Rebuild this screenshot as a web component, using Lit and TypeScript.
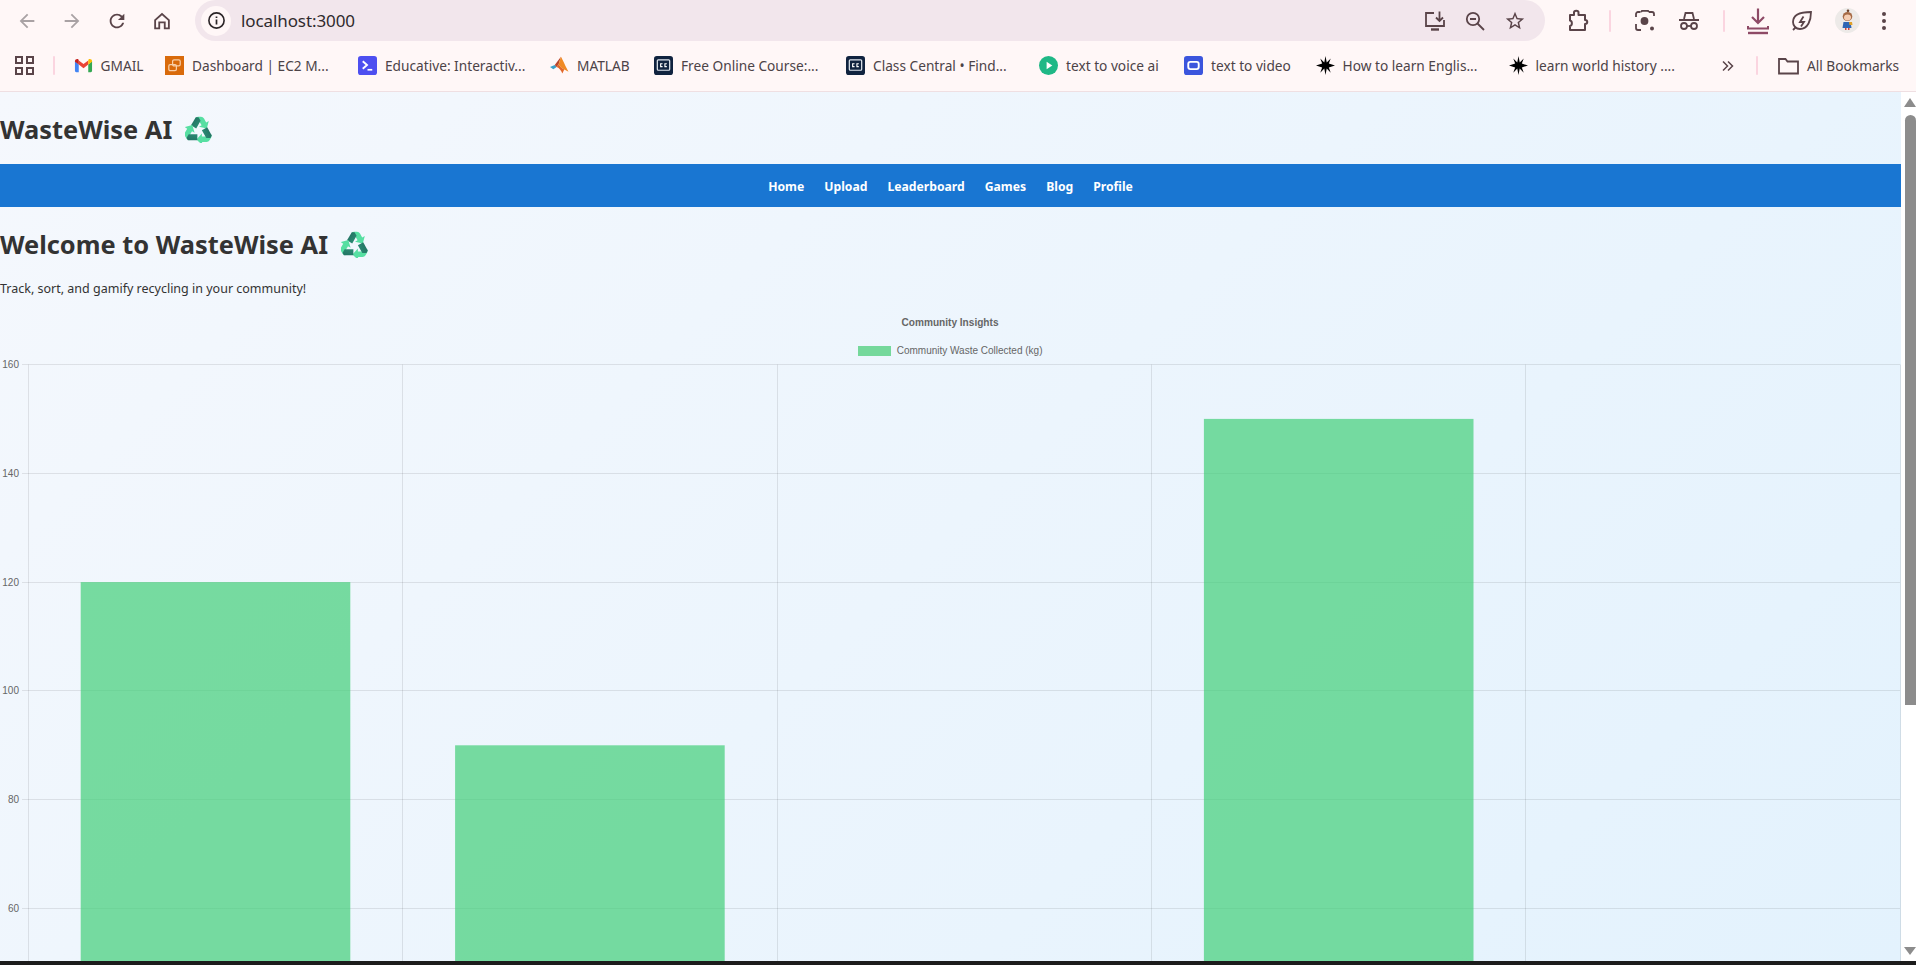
import { LitElement, css, html, svg } from "lit";
import { customElement } from "lit/decorators.js";
import { styleMap } from "lit/directives/style-map.js";

const ICON = "#5a4449";

// recycling symbol, one arrow drawn three times around the centre
const recycle = () => html`
  <svg class="recycle" viewBox="0 0 27 27">
    <defs>
      <linearGradient id="dark" x1="0" y1="0" x2="1" y2="1">
        <stop offset="0" stop-color="#1f6a5c"></stop>
        <stop offset="1" stop-color="#2f9379"></stop>
      </linearGradient>
    </defs>
    ${[0, 120, 240].map(
      (a) => svg`
        <g transform=${`rotate(${a} 13.5 15)`}>
          <path d="M10 2.500Q11 .8 13 .8H16Q18 .8 19 2.600L21.200 6.400 23.800 4.900 21.800 12.600 14 10.800 16.600 9.300 14.200 5.200Z" fill="#57dfa2"></path>
          <path d="M10.800 1.200 6 9.300 11.200 12.400 15.600 4.800 13.500 1.200Z" fill="url(#dark)"></path>
        </g>
      `,
    )}
  </svg>
`;

const path = (d: string, size = 22, fill = ICON) => html`
  <svg width=${size} height=${size} viewBox="0 0 24 24" fill=${fill}><path d=${d}></path></svg>
`;

const navIcons = {
  back: "M20 11H7.830l5.590-5.590L12 4l-8 8 8 8 1.410-1.410L7.830 13H20z",
  forward: "M12 4l-1.410 1.410L16.170 11H4v2h12.170l-5.580 5.590L12 20l8-8z",
  reload:
    "M17.650 6.350A7.960 7.960 0 0 0 12 4c-4.420 0-7.990 3.580-7.990 8s3.570 8 7.990 8c3.730 0 6.840-2.550 7.730-6h-2.080A5.990 5.990 0 0 1 12 18c-3.310 0-6-2.690-6-6s2.690-6 6-6c1.660 0 3.140.690 4.220 1.780L13 11h7V4z",
  home: "M12 3 3.500 10.500V21H10v-6.500h4V21h6.500V10.500zM18.500 19H16v-6.500H8V19H5.500v-7.600L12 5.700l6.500 5.700z",
  star: "M22 9.240l-7.190-.620L12 2 9.190 8.630 2 9.240l5.460 4.730L5.820 21 12 17.270 18.180 21l-1.630-7.030zM12 15.400l-3.760 2.270 1-4.280-3.320-2.880 4.380-.380L12 6.100l1.710 4.040 4.380.380-3.320 2.880 1 4.280z",
};

const bookmarks = [
  { icon: "gmail", label: "GMAIL", x: 73.5, next: 165 },
  { icon: "aws", label: "Dashboard | EC2 M...", x: 165, next: 358 },
  { icon: "educative", label: "Educative: Interactiv...", x: 358, next: 550 },
  { icon: "matlab", label: "MATLAB", x: 550, next: 654 },
  { icon: "cc", label: "Free Online Course:...", x: 654, next: 846 },
  { icon: "cc", label: "Class Central • Find...", x: 846, next: 1039 },
  { icon: "play", label: "text to voice ai", x: 1039, next: 1184 },
  { icon: "video", label: "text to video", x: 1184, next: 1315.5 },
  { icon: "burst", label: "How to learn Englis...", x: 1315.5, next: 1508.5 },
  { icon: "burst", label: "learn world history ....", x: 1508.5, next: 1722 },
];

const favicon = (name: string) => {
  switch (name) {
    case "gmail":
      return html`<svg class="fav" viewBox="0 0 20 20">
        <path d="M1 5.500v10c0 .800.600 1.500 1.400 1.500H5V9z" fill="#4285f4"></path>
        <path d="M19 5.500v10c0 .800-.600 1.500-1.400 1.500H15V9z" fill="#34a853"></path>
        <path d="M5 9V4.800L10 8.500l5-3.700V9l-5 3.800z" fill="#ea4335"></path>
        <path d="M1 5.500C1 3.600 3.200 2.500 4.700 3.600L5 4.800V9L1 6z" fill="#c5221f"></path>
        <path d="M19 5.500c0-1.900-2.200-3-3.700-1.900l-.3 1.200V9l4-3z" fill="#fbbc04"></path>
      </svg>`;
    case "aws":
      return html`<svg class="fav" viewBox="0 0 20 20">
        <rect width="20" height="20" fill="#d96a0b"></rect>
        <g fill="none" stroke="#f8cfa8" stroke-width="1.300">
          <rect x="8" y="4" width="8" height="6.500" rx="1.500"></rect>
          <rect x="4" y="9" width="8" height="6.500" rx="1.500"></rect>
        </g>
      </svg>`;
    case "educative":
      return html`<svg class="fav" viewBox="0 0 20 20">
        <rect width="20" height="20" rx="3" fill="#4d4ff0"></rect>
        <path d="M5 5.500 9.500 9.500 5 13.500" fill="none" stroke="#fff" stroke-width="2"></path>
        <path d="M10 14.500h5" stroke="#fff" stroke-width="1.800"></path>
      </svg>`;
    case "matlab":
      return html`<svg class="fav" viewBox="0 0 20 20">
        <path d="M0 11.500 5 9.500l2 2-3.500 2.500z" fill="#3aa0c8"></path>
        <path d="M5 9.500 11.500.800 9 9 7 11.500z" fill="#b9452a"></path>
        <path d="M11.500.800c2 3 5 11 8 15.700l-4.500-2.400-3-1.800-3-3.300z" fill="#f08a24"></path>
        <path d="M7 11.500 9 9l3 3.300 3 1.800-2 4.400c-1-3-3-5.800-6-7z" fill="#e2672a"></path>
      </svg>`;
    case "cc":
      return html`<svg class="fav" viewBox="0 0 20 20">
        <rect width="20" height="20" rx="3" fill="#10233f"></rect>
        <rect x="3.500" y="4" width="13" height="11" rx="1" fill="none" stroke="#dfe6ee" stroke-width="1.300"></rect>
        <path d="M9 8.200H7v3h2M13.500 8.200h-2v3h2" fill="none" stroke="#fff" stroke-width="1.200"></path>
      </svg>`;
    case "play":
      return html`<svg class="fav" viewBox="0 0 20 20">
        <circle cx="10" cy="10" r="10" fill="#1fb886"></circle>
        <path d="M8 6l6 4-6 4z" fill="#fff"></path>
      </svg>`;
    case "video":
      return html`<svg class="fav" viewBox="0 0 20 20">
        <rect width="20" height="20" rx="3" fill="#3b55dd"></rect>
        <rect x="4.500" y="6.200" width="11" height="7.600" rx="2.200" fill="none" stroke="#fff" stroke-width="2"></rect>
      </svg>`;
    default:
      return html`<svg class="fav" viewBox="0 0 20 20">
        <path d="M10 0l1.300 6.900L15.500 2.500l-2 5.500L20 10l-6.500 2 2 5.500-4.200-4.400L10 20l-1.300-6.900-4.200 4.400 2-5.500L0 10l6.500-2-2-5.500 4.200 4.400z" fill="#000"></path>
      </svg>`;
  }
};

@customElement("browser-chrome")
class BrowserChrome extends LitElement {
  static styles = css`
    :host {
      display: block;
      background: #fff7f7;
      font-family: "Noto Sans", sans-serif;
      color: #4a3d42;
    }
    .toolbar {
      display: flex;
      align-items: center;
      height: 41px;
    }
    .nav {
      display: flex;
      align-items: center;
      width: 195px;
      padding-left: 16px;
      box-sizing: border-box;
      gap: 23px;
    }
    .nav svg {
      display: block;
    }
    .omni {
      display: flex;
      align-items: center;
      width: 1350px;
      height: 41px;
      background: #f2e6ec;
      border-radius: 21px;
      box-sizing: border-box;
      padding: 0 19px 0 6px;
    }
    .info {
      display: flex;
      align-items: center;
      justify-content: center;
      width: 30px;
      height: 30px;
      background: #fff7f7;
      border-radius: 50%;
    }
    .url {
      margin-left: 10px;
      font-size: 17px;
      color: #2f2a2c;
      letter-spacing: -0.1px;
      flex: 1;
    }
    .omni-icons {
      display: flex;
      align-items: center;
      gap: 18px;
    }
    .omni-icons svg {
      display: block;
    }
    .actions {
      display: flex;
      align-items: center;
      margin-left: 22px;
    }
    .actions svg {
      display: block;
    }
    .sep {
      width: 2px;
      height: 22px;
      background: #fbd5e0;
      border-radius: 1px;
    }
    .bookmarks {
      display: flex;
      align-items: center;
      height: 51px;
      box-sizing: border-box;
      padding-bottom: 1px;
      border-bottom: 1px solid #efdfe2;
      font-size: 13.7px;
      color: #4c4347;
      white-space: nowrap;
    }
    .apps {
      display: flex;
      width: 53px;
      box-sizing: border-box;
      padding-left: 15px;
    }
    .bookmarks .sep {
      height: 19px;
    }
    .list {
      display: flex;
      align-items: center;
      margin-left: 18.5px;
    }
    .mark {
      display: flex;
      align-items: center;
      gap: 8px;
      overflow: hidden;
      flex: none;
    }
    .fav {
      width: 19px;
      height: 19px;
      flex: none;
    }
    .more {
      width: 34px;
      display: flex;
      align-items: center;
    }
    .all {
      display: flex;
      align-items: center;
      gap: 8px;
      margin-left: 20px;
    }
  `;

  render() {
    return html`
      <div class="toolbar">
        <div class="nav">
          ${path(navIcons.back, 22, "#a9a2a4")} ${path(navIcons.forward, 22, "#a9a2a4")}
          ${path(navIcons.reload)} ${path(navIcons.home)}
        </div>
        <div class="omni">
          <div class="info">
            <svg width="19" height="19" viewBox="0 0 20 20">
              <circle cx="10" cy="10" r="8" fill="none" stroke="#2b2527" stroke-width="1.700"></circle>
              <path d="M10 9v5.200M10 5.800v1.600" stroke="#2b2527" stroke-width="1.800"></path>
            </svg>
          </div>
          <span class="url">localhost:3000</span>
          <div class="omni-icons">
            <svg width="22" height="22" viewBox="0 0 22 22" fill="none" stroke=${ICON} stroke-width="1.800">
              <path d="M10 3H2v13h18v-6"></path>
              <path d="M7 19.500h8" stroke-width="2.400"></path>
              <path d="M15.500 1.500v9M12 7.500l3.500 3.500 3.500-3.500"></path>
            </svg>
            <svg width="22" height="22" viewBox="0 0 22 22" fill="none" stroke=${ICON} stroke-width="1.800">
              <circle cx="9" cy="9" r="6.200"></circle>
              <path d="M13.500 13.500 20 20M6 9h6"></path>
            </svg>
            ${path(navIcons.star)}
          </div>
        </div>
        <div class="actions">
          <svg width="22" height="24" viewBox="0 0 22 24" fill="none" stroke=${ICON} stroke-width="2" stroke-linejoin="round">
            <path d="M3 6h4V3.500C7 1 11.500 1 11.500 3.500V6H18v5c3 0 3 4 0 4v6H3v-4c2.500-.500 2.500-5 0-5.500z"></path>
          </svg>
          <div class="sep" style="margin-left:20px"></div>
          <svg style="margin-left:23px" width="22" height="22" viewBox="0 0 22 22" fill="none" stroke=${ICON} stroke-width="1.800">
            <path d="M2 7V4c0-1 1-2 2-2h2.500M15 2h3c1 0 2 1 2 2v2M2 14v4c0 1 1 2 2 2h3"></path>
            <path d="M7 2l1-1.200h6L15 2"></path>
            <circle cx="10.500" cy="11" r="3" fill=${ICON}></circle>
            <circle cx="18" cy="18.500" r="2" fill=${ICON} stroke="none"></circle>
          </svg>
          <svg style="margin-left:21px" width="24" height="22" viewBox="0 0 24 22" fill="none" stroke=${ICON} stroke-width="1.800">
            <path d="M7 9l1.500-6h7L17 9" fill="none"></path>
            <path d="M2 10h20" stroke-width="2"></path>
            <circle cx="7" cy="16" r="3"></circle>
            <circle cx="17" cy="16" r="3"></circle>
            <path d="M10 16h4"></path>
          </svg>
          <div class="sep" style="margin-left:22px"></div>
          <svg style="margin-left:21px" width="24" height="28" viewBox="0 0 24 28" fill="none" stroke="#8e4a66" stroke-width="2.200">
            <path d="M12 1.500v14M6 10l6 6 6-6"></path>
            <path d="M2 19v2.500h20V19" stroke-width="2"></path>
            <path d="M2 26h20" stroke-width="2.400"></path>
          </svg>
          <svg style="margin-left:21px" width="22" height="22" viewBox="0 0 22 22" fill="none" stroke=${ICON} stroke-width="1.800">
            <path d="M20 2C11 2 2 4 2 12c0 4 3 7 7 7 8 0 11-9 11-17z"></path>
            <path d="M12.500 6.500 9 12h4l-3 4.500"></path>
            <path d="M2 20l3-3"></path>
          </svg>
          <svg style="margin-left:22px" width="25" height="25" viewBox="0 0 25 25">
            <circle cx="12.500" cy="12.500" r="12.500" fill="#edeae8"></circle>
            <circle cx="13" cy="2.800" r="1.300" fill="#6b3f28"></circle>
            <ellipse cx="12.500" cy="8.500" rx="4.800" ry="4.600" fill="#a66a45"></ellipse>
            <ellipse cx="12.500" cy="9.500" rx="3.500" ry="3" fill="#f5cdb2"></ellipse>
            <path d="M8.500 14h7l1 6h-9z" fill="#2f66b5"></path>
            <path d="M14 14h3l.5 3h-3z" fill="#e0a12a"></path>
            <path d="M10 20h1.500v2H10zM13 20h1.500v2H13z" fill="#d2453d"></path>
          </svg>
          <svg style="margin-left:21px" width="6" height="20" viewBox="0 0 6 20" fill=${ICON}>
            <circle cx="3" cy="3" r="2"></circle>
            <circle cx="3" cy="10" r="2"></circle>
            <circle cx="3" cy="17" r="2"></circle>
          </svg>
        </div>
      </div>
      <div class="bookmarks">
        <div class="apps">
          <svg width="19" height="19" viewBox="0 0 19 19" fill="none" stroke=${ICON} stroke-width="2">
            <rect x="1" y="1" width="6" height="6"></rect>
            <rect x="12" y="1" width="6" height="6"></rect>
            <rect x="1" y="12" width="6" height="6"></rect>
            <rect x="12" y="12" width="6" height="6"></rect>
          </svg>
        </div>
        <div class="sep"></div>
        <div class="list">
          ${bookmarks.map(
            (b) => html`
              <div class="mark" style=${styleMap({ width: `${b.next - b.x}px` })}>
                ${favicon(b.icon)}<span>${b.label}</span>
              </div>
            `,
          )}
          <div class="more">
            <svg width="12" height="12" viewBox="0 0 12 12" fill="none" stroke=${ICON} stroke-width="1.500">
              <path d="M1 1.500 5.500 6 1 10.500M6 1.500 10.500 6 6 10.500"></path>
            </svg>
          </div>
          <div class="sep"></div>
          <div class="all">
            <svg width="21" height="18" viewBox="0 0 21 18" fill="none" stroke=${ICON} stroke-width="1.800">
              <path d="M1 2h6.500l2 2.500H20V16.500H1z"></path>
            </svg>
            <span>All Bookmarks</span>
          </div>
        </div>
      </div>
    `;
  }
}

const TICKS = [160, 140, 120, 100, 80, 60];
const BARS = [120, 90, 0, 150, 0];

// chart sits at the top of its svg box, y here is measured from the svg top
@customElement("waste-chart")
class WasteChart extends LitElement {
  static styles = css`
    :host {
      display: block;
    }
    svg {
      display: block;
      width: 1901px;
      height: 700px;
      font-family: "Liberation Sans", Arial, sans-serif;
    }
    .title {
      font-size: 10.1px;
      font-weight: 700;
      fill: #666;
      text-anchor: middle;
    }
    .legend {
      font-size: 10px;
      fill: #666;
    }
    .tick {
      font-size: 10px;
      fill: #666;
      text-anchor: end;
    }
    .grid {
      stroke: rgba(0, 0, 0, 0.09);
      stroke-width: 1;
    }
    .bar {
      fill: rgba(66, 206, 120, 0.7);
    }
  `;

  render() {
    const top = 65.5;
    const left = 28.3;
    const step = 374.4;
    const unit = 108.8 / 20;
    const yOf = (v: number) => top + (160 - v) * unit;
    return html`
      <svg viewBox="0 0 1901 700">
        <text class="title" x="950" y="27">Community Insights</text>
        <rect x="858" y="47" width="33" height="10" fill="#75d89b"></rect>
        <text class="legend" x="896.7" y="52.5" dominant-baseline="middle">Community Waste Collected (kg)</text>
        ${[0, 1, 2, 3, 4, 5].map((i) => {
          const x = Math.floor(left + i * step) + 0.5;
          return svg`<line class="grid" x1=${x} x2=${x} y1=${top} y2="700"></line>`;
        })}
        ${TICKS.map((t) => {
          const y = Math.floor(yOf(t)) + 0.5;
          return svg`
            <line class="grid" x1="22" x2="1900" y1=${y} y2=${y}></line>
            <text class="tick" x="19" y=${y + 3.5}>${t}</text>
          `;
        })}
        ${BARS.map((v, i) =>
          v
            ? svg`<rect class="bar" x=${left + i * step + 52.4} y=${yOf(v)} width="269.6" height=${700 - yOf(v)}></rect>`
            : "",
        )}
      </svg>
    `;
  }
}

@customElement("app-root")
class AppRoot extends LitElement {
  static styles = css`
    :host {
      display: flex;
      flex-direction: column;
      height: 965px;
      overflow: hidden;
      background: #1c1c1c;
      font-family: "Noto Sans", sans-serif;
      color: #333;
    }
    .viewport {
      display: flex;
      height: 869px;
      overflow: hidden;
      flex: none;
    }
    .page {
      width: 1901px;
      background: linear-gradient(135deg, #f5f8fd 0%, #e3f2fd 100%);
      overflow: hidden;
    }
    .heading {
      display: flex;
      align-items: center;
      gap: 13px;
      margin: 0;
      font-size: 25.4px;
      font-weight: 700;
      line-height: 36px;
      white-space: nowrap;
    }
    header {
      height: 72px;
      box-sizing: border-box;
      padding-top: 2px;
      display: flex;
      align-items: center;
    }
    .recycle {
      width: 27px;
      height: 27px;
      flex: none;
    }
    nav {
      display: flex;
      justify-content: center;
      align-items: center;
      gap: 20px;
      height: 43px;
      box-sizing: border-box;
      padding-top: 1px;
      background: #1976d2;
      color: #fff;
      font-size: 12.2px;
      font-weight: 700;
    }
    main .heading {
      margin: 19px 0 17px;
    }
    main p {
      margin: 0;
      font-size: 12.5px;
      line-height: 20px;
    }
    .scroll {
      width: 15px;
      background: #fff;
      display: flex;
      flex-direction: column;
      align-items: flex-end;
      padding-top: 6px;
      box-sizing: border-box;
    }
    .up,
    .down {
      width: 0;
      height: 0;
      border-left: 6px solid transparent;
      border-right: 6px solid transparent;
    }
    .up {
      border-bottom: 9px solid #8c8c8c;
    }
    .thumb {
      width: 11px;
      height: 590px;
      margin-top: 8px;
      background: #8c8c8c;
      border-radius: 6px 6px 0 0;
    }
    .down {
      margin-top: auto;
      margin-bottom: 6px;
      border-top: 8px solid #8c8c8c;
    }
  `;

  render() {
    return html`
      <browser-chrome></browser-chrome>
      <div class="viewport">
        <div class="page">
          <header>
            <h1 class="heading">WasteWise AI ${recycle()}</h1>
          </header>
          <nav>
            <span>Home</span><span>Upload</span><span>Leaderboard</span>
            <span>Games</span><span>Blog</span><span>Profile</span>
          </nav>
          <main>
            <h2 class="heading">Welcome to WasteWise AI ${recycle()}</h2>
            <p>Track, sort, and gamify recycling in your community!</p>
            <waste-chart></waste-chart>
          </main>
        </div>
        <div class="scroll">
          <div class="up"></div>
          <div class="thumb"></div>
          <div class="down"></div>
        </div>
      </div>
    `;
  }
}
